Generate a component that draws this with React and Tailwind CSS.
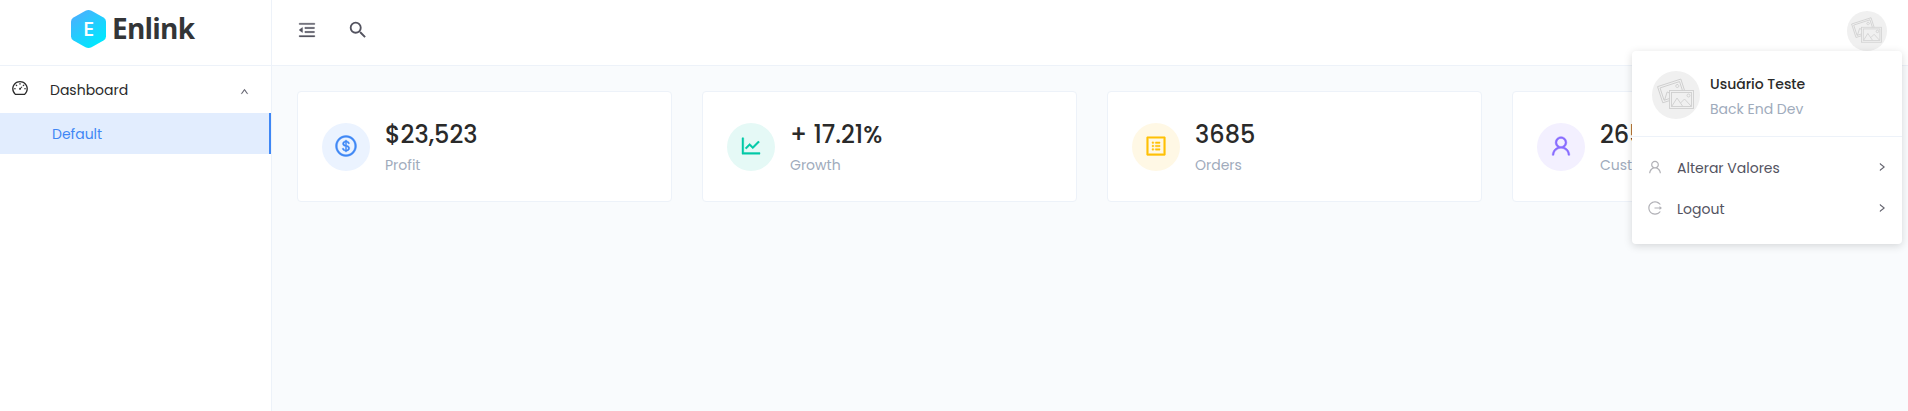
import React from "react";
import {
  AiOutlineDashboard, AiOutlineMenuFold, AiOutlineDollar, AiOutlineLineChart,
  AiOutlineProfile, AiOutlineUser, AiOutlineLogout, AiOutlineRight, AiOutlineUp,
} from "react-icons/ai";
import { MdSearch } from "react-icons/md";

function Photo({ className }) {
  return (
    <svg viewBox="0 0 48 48" className={className} fill="#f0f0f0" stroke="#cfcfcf" strokeWidth="0.9">
      <circle cx="24" cy="24" r="24" stroke="none" />
      <g transform="rotate(-18 18 20)">
        <rect x="7.500" y="12" width="24.500" height="17" />
        <rect x="9.500" y="14" width="20.500" height="13" />
        <path d="M10 27l5-7 5 5" fill="none" />
        <circle cx="26.500" cy="17.500" r="1.500" />
      </g>
      <rect x="17.500" y="19.500" width="24" height="18" />
      <rect x="19.500" y="21.500" width="20" height="14" />
      <path d="M20 35l5-8 5.500 8m-2-3l4-4 6.500 7" fill="none" />
      <circle cx="36.500" cy="24.500" r="1.500" />
    </svg>
  );
}

const stats = [
  { Icon: AiOutlineDollar, value: "$23,523", label: "Profit", tint: "bg-[#ebf3ff] text-[#3f87f5]" },
  { Icon: AiOutlineLineChart, value: "+ 17.21%", label: "Growth", tint: "bg-[#e5f9f6] text-[#00c9a7]" },
  { Icon: AiOutlineProfile, value: "3685", label: "Orders", tint: "bg-[#fff8e5] text-[#ffc107]" },
  { Icon: AiOutlineUser, value: "2654", label: "Customers", tint: "bg-[#f3f0ff] text-[#886cff]" },
];

const actions = [
  { name: "Alterar Valores", Icon: AiOutlineUser },
  { name: "Logout", Icon: AiOutlineLogout },
];

export default function App() {
  return (
    <div className="relative flex h-[411px] w-[1908px] overflow-hidden bg-[#f9fbfd] font-['Poppins','Noto_Sans',sans-serif] text-[14px] leading-[21px] text-[#2a2a2a]">
      <aside className="w-[272px] shrink-0 border-r border-[#edf2f9] bg-white">
        <div className="flex h-[66px] items-start border-b border-[#edf2f9] pl-[71px] pt-[10px]">
          <div className="relative h-[38px] w-[35px]">
            <svg width="35" height="38" viewBox="0 0 35 38">
              <defs>
                <linearGradient id="logo" x1="0.1" y1="0" x2="0.75" y2="0.9">
                  <stop offset="0" stopColor="#4facfe" />
                  <stop offset="1" stopColor="#00e7fe" />
                </linearGradient>
              </defs>
              <path d="M14.500 .8q3-1.600 6 0l12 6.700q2.500 1.500 2.500 4v15q0 2.500-2.500 4l-12 6.700q-3 1.600-6 0l-12-6.700Q0 29 0 26.500v-15Q0 9 2.500 7.500z" fill="url(#logo)" />
            </svg>
            <span className="absolute inset-0 text-center font-['Open_Sans'] text-[20px] font-semibold leading-[38px] text-white">E</span>
          </div>
          <span className="ml-[6px] origin-left scale-x-[0.965] whitespace-nowrap font-['Open_Sans'] text-[29px] font-bold leading-[36px] tracking-[-0.8px] text-[#333537]">Enlink</span>
        </div>
        <div className="flex h-[47px] items-center pl-[11px]">
          <AiOutlineDashboard size={18} className="-mt-[3px]" />
          <span className="ml-[21px] pt-[2px]">Dashboard</span>
          <AiOutlineUp size={9} className="ml-auto mr-[22px] mt-1 text-[#53535f]" strokeWidth={30} />
        </div>
        <div className="flex h-[41px] items-center border-r-2 border-[#3f87f5] bg-[#e2edfe] pl-[52px] pt-[2px] text-[#3f87f5]">
          Default
        </div>
      </aside>

      <main className="min-w-0 flex-1">
        <header className="flex h-[66px] items-start border-b border-[#edf2f9] bg-white pl-[25px] pt-[20px] text-[#53535f]">
          <AiOutlineMenuFold size={20} strokeWidth={15} />
          <MdSearch size={22} className="-mt-px ml-[30px]" />
          <Photo className="-mt-[9px] ml-auto mr-[21px] size-10" />
        </header>
        <section className="flex gap-[30px] pl-[25px] pt-[25px]">
          {stats.map(({ Icon, value, label, tint }) => (
            <div key={label} className="flex h-[111px] w-[375px] shrink-0 items-start rounded border border-[#edf2f9] bg-white pl-6 pt-[25px]">
              <div className={`mt-1.5 flex size-12 items-center justify-center rounded-full ${tint}`}>
                <Icon size={24} className="-mt-0.5" strokeWidth={18} />
              </div>
              <div className="ml-[15px]">
                <div className="h-[38px] text-[24px] font-medium leading-[36px]">{value}</div>
                <div className="text-[#a0abbc]">{label}</div>
              </div>
            </div>
          ))}
        </section>
      </main>

      <div className="absolute left-[1632px] top-[51px] h-[193px] w-[270px] rounded bg-white shadow-[0_2px_8px_rgba(0,0,0,0.15)]">
        <div className="flex h-[86px] items-start border-b border-[#edf2f9] pl-5 pt-5">
          <Photo className="size-12" />
          <div className="ml-[10px] flex flex-col gap-1 pt-[3px]">
            <div className="font-medium">Usuário Teste</div>
            <div className="text-[#a0abbc]">Back End Dev</div>
          </div>
        </div>
        <div className="pt-[10px] text-[#53535f]">
          {actions.map(({ name, Icon }) => (
            <div key={name} className="flex h-[41px] items-center pl-[15px] pr-[15px]">
              <Icon size={16} className="-mt-0.5 opacity-45" />
              <span className="ml-[14px] pt-px">{name}</span>
              <AiOutlineRight size={10} className="-mt-0.5 ml-auto" strokeWidth={30} />
            </div>
          ))}
        </div>
      </div>
    </div>
  );
}
